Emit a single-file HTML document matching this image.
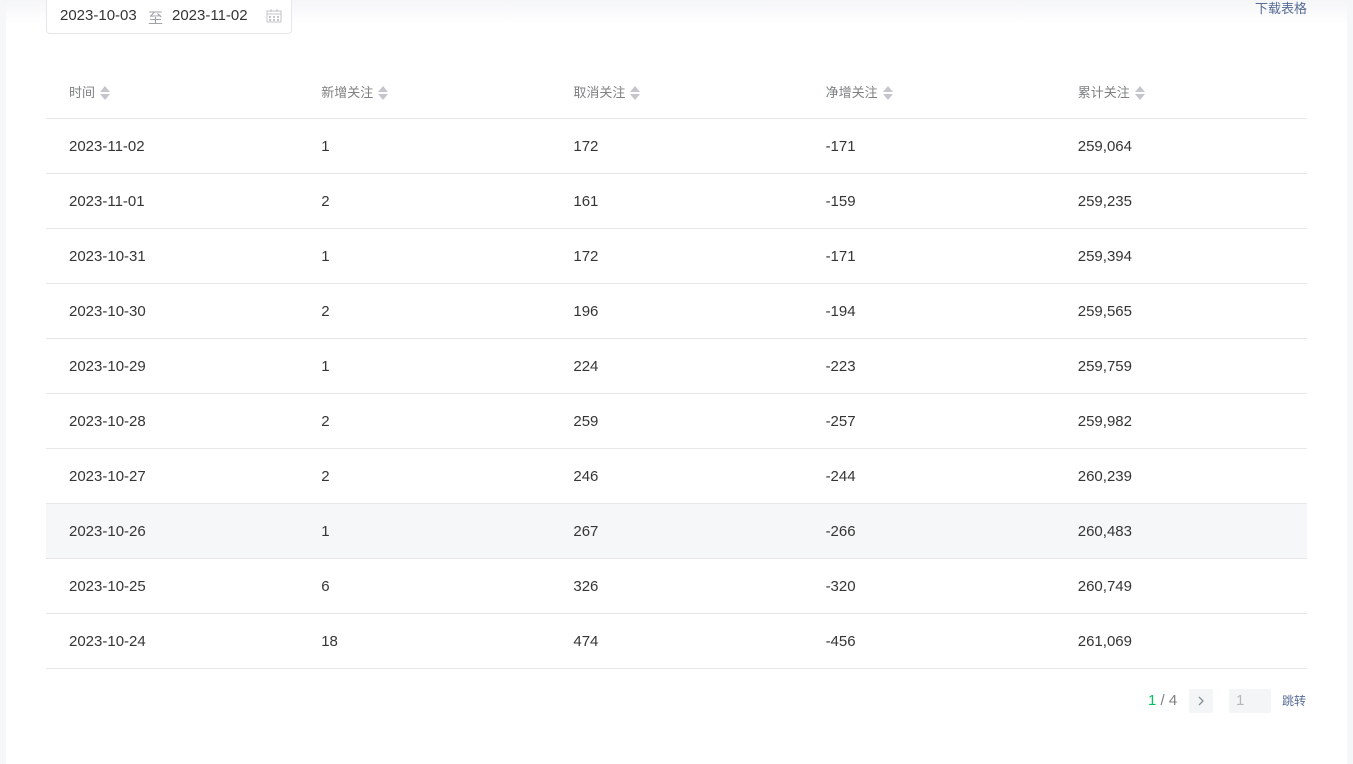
<!DOCTYPE html>
<html><head><meta charset="utf-8"><style>
*{margin:0;padding:0;box-sizing:border-box}
body{width:1353px;height:764px;background:#f6f7f9;font-family:"Liberation Sans","Noto Sans CJK SC",sans-serif;position:relative;overflow:hidden;color:#353535}
.card{position:absolute;left:6px;top:0;width:1341px;height:764px;background:#fff}
.shade{position:absolute;left:6px;top:0;width:1341px;height:24px;background:linear-gradient(#f5f6f8,#fff)}
.dp{position:absolute;left:46px;top:-10px;width:246px;height:44px;border:1px solid #e4e6eb;border-radius:4px;background:#fff;font-size:15px;color:#353535}
.dp span{position:absolute;top:16px}
.dl{position:absolute;right:46px;top:-2px;font-size:13px;color:#576b95}
table{position:absolute;left:46px;top:64px;width:1261px;border-collapse:collapse;font-size:15px}
td,th{padding:2px 0 0 23px;height:55px;text-align:left;font-weight:normal;border-bottom:1px solid #e7e7eb;width:252px}
th{color:#7e8081;font-size:13px;height:54px;padding-top:2px}
tr.h td{background:#f6f7f8}
.s{display:inline-block;vertical-align:middle;margin-left:5px;width:10px;height:14px;position:relative;top:-1px}
.s:before,.s:after{content:"";position:absolute;left:0;border-left:5px solid transparent;border-right:5px solid transparent}
.s:before{top:0;border-bottom:6px solid #c4c6cc}
.s:after{top:8px;border-top:6px solid #c4c6cc}
.pg{position:absolute;top:692px;font-size:15px}
</style></head><body>
<div class="card"></div><div class="shade"></div>
<div class="dp"><span style="left:13px">2023-10-03</span><span style="left:101px;color:#a0a3a8">至</span><span style="left:125px">2023-11-02</span>
<svg style="position:absolute;left:219px;top:18px" width="16" height="14" viewBox="0 0 16 14"><rect x="1" y="2" width="14" height="11" fill="none" stroke="#c4c6cc"/><line x1="1" y1="5" x2="15" y2="5" stroke="#c4c6cc"/><line x1="5" y1="0" x2="5" y2="3" stroke="#c4c6cc"/><line x1="11" y1="0" x2="11" y2="3" stroke="#c4c6cc"/><g fill="#c4c6cc"><rect x="3" y="7" width="2" height="2"/><rect x="7" y="7" width="2" height="2"/><rect x="11" y="7" width="2" height="2"/><rect x="3" y="10" width="2" height="2"/><rect x="7" y="10" width="2" height="2"/><rect x="11" y="10" width="2" height="2"/></g></svg></div>
<div class="dl">下载表格</div>
<table>
<tr><th>时间<i class="s"></i></th><th>新增关注<i class="s"></i></th><th>取消关注<i class="s"></i></th><th>净增关注<i class="s"></i></th><th>累计关注<i class="s"></i></th></tr>
<tr><td>2023-11-02</td><td>1</td><td>172</td><td>-171</td><td>259,064</td></tr>
<tr><td>2023-11-01</td><td>2</td><td>161</td><td>-159</td><td>259,235</td></tr>
<tr><td>2023-10-31</td><td>1</td><td>172</td><td>-171</td><td>259,394</td></tr>
<tr><td>2023-10-30</td><td>2</td><td>196</td><td>-194</td><td>259,565</td></tr>
<tr><td>2023-10-29</td><td>1</td><td>224</td><td>-223</td><td>259,759</td></tr>
<tr><td>2023-10-28</td><td>2</td><td>259</td><td>-257</td><td>259,982</td></tr>
<tr><td>2023-10-27</td><td>2</td><td>246</td><td>-244</td><td>260,239</td></tr>
<tr class="h"><td>2023-10-26</td><td>1</td><td>267</td><td>-266</td><td>260,483</td></tr>
<tr><td>2023-10-25</td><td>6</td><td>326</td><td>-320</td><td>260,749</td></tr>
<tr><td>2023-10-24</td><td>18</td><td>474</td><td>-456</td><td>261,069</td></tr>
</table>
<div class="pg" style="left:1148px;color:#7e8081"><span style="color:#07c160">1</span> / 4</div>
<div style="position:absolute;left:1189px;top:689px;width:24px;height:24px;background:#f4f5f7;border-radius:2px"><svg width="24" height="24" viewBox="0 0 24 24"><path d="M10 8l4 4-4 4" fill="none" stroke="#8a8d93" stroke-width="1.3"/></svg></div>
<div style="position:absolute;left:1229px;top:689px;width:42px;height:24px;background:#f4f5f7;border-radius:2px;color:#b5b7bb;font-size:15px;padding-left:7px;line-height:24px">1</div>
<div style="position:absolute;left:1282px;top:692px;font-size:12px;color:#576b95">跳转</div>
</body></html>
